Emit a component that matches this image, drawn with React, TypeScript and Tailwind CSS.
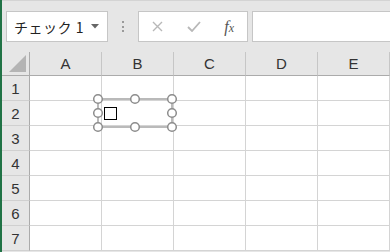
import React from "react";

const cols = ["A", "B", "C", "D", "E"];
const rows = [1, 2, 3, 4, 5, 6, 7];

export default function App() {
  const font = { fontFamily: '"Noto Sans CJK JP", "Noto Sans", sans-serif' };
  return (
    <div className="relative w-[390px] h-[252px] overflow-hidden bg-[#e6e6e6] flex" style={font}>
      <div className="w-[2px] h-full bg-[#217346] shrink-0" />
      <div className="flex flex-col flex-1 min-w-0">
        {/* toolbar */}
        <div className="h-[52px] shrink-0 flex items-start pt-[11px] pl-[4px] border-t border-[#d4d4d4]">
          <div className="w-[102px] h-[31px] bg-white border border-[#c6c6c6] flex items-center pl-[7px] pr-[6px] mt-[-1px]">
            <span className="text-[14px] text-[#222] leading-none whitespace-nowrap tracking-[0.5px] flex-1">チェック 1</span>
            <svg width="8" height="5" viewBox="0 0 8 5" className="mr-[2px] shrink-0">
              <path d="M0 0 L8 0 L4 4.5 Z" fill="#666" />
            </svg>
          </div>
          <div className="w-[30px] h-[31px] flex flex-col items-center justify-center gap-[2.5px] mt-[-1px]">
            <div className="w-[2px] h-[2px] bg-[#9a9a9a]" />
            <div className="w-[2px] h-[2px] bg-[#9a9a9a]" />
            <div className="w-[2px] h-[2px] bg-[#9a9a9a]" />
          </div>
          <div className="w-[110px] h-[31px] bg-white border border-[#c6c6c6] flex items-center mt-[-1px]">
            <div className="w-[36px] flex justify-center ml-[1px]">
              <svg width="11" height="11" viewBox="0 0 11 11">
                <path d="M1 1 L10 10 M10 1 L1 10" stroke="#b8b8b8" strokeWidth="1.4" />
              </svg>
            </div>
            <div className="w-[36px] flex justify-center">
              <svg width="14" height="11" viewBox="0 0 14 11">
                <path d="M1 6 L5 10 L13 1" stroke="#b8b8b8" strokeWidth="1.8" fill="none" />
              </svg>
            </div>
            <div className="w-[36px] flex justify-center">
              <span className="text-[16px] italic text-[#555] leading-none" style={{ fontFamily: '"Liberation Serif", serif' }}>
                f<span className="text-[12px]">x</span>
              </span>
            </div>
          </div>
          <div className="ml-[4px] flex-1 h-[31px] bg-white border border-[#c6c6c6] border-r-0 mt-[-1px]" />
        </div>
        {/* grid */}
        <div className="grid grid-cols-[28px_72px_72px_72px_72px_72px] grid-rows-[24px_25px_25px_25px_25px_25px_25px_25px]">
          <div className="bg-[#e6e6e6] border-r border-b border-[#ababab] relative">
            <svg width="18" height="18" viewBox="0 0 18 18" className="absolute left-[7px] top-[3px]">
              <path d="M17 0 L17 17 L0 17 Z" fill="#b4b4b4" />
            </svg>
          </div>
          {cols.map((c) => (
            <div key={c} className="bg-[#e6e6e6] border-r border-b border-r-[#c6c6c6] border-b-[#ababab] flex items-center justify-center text-[15px] text-[#333] leading-none" style={{ fontFamily: '"Liberation Sans", "Noto Sans", sans-serif' }}>
              {c}
            </div>
          ))}
          {rows.map((r) => (
            <React.Fragment key={r}>
              <div className="bg-[#e6e6e6] border-r border-b border-r-[#ababab] border-b-[#d0d0d0] flex items-center justify-center text-[15px] text-[#333] leading-none pt-[1px]" style={{ fontFamily: '"Liberation Sans", "Noto Sans", sans-serif' }}>
                {r}
              </div>
              {cols.map((c) => (
                <div key={c} className="bg-white border-r border-b border-[#d4d4d4]" />
              ))}
            </React.Fragment>
          ))}
        </div>
      </div>
      {/* checkbox object with selection handles */}
      <svg width="86" height="40" viewBox="0 0 86 40" className="absolute left-[92px] top-[93px]">
        <rect x="6" y="6" width="74" height="28" fill="none" stroke="#8c8c8c" strokeWidth="1.2" />
        <rect x="12.5" y="14.5" width="12" height="12" fill="white" stroke="#000" strokeWidth="1" />
        {[
          [6, 6], [43, 6], [80, 6],
          [6, 20], [80, 20],
          [6, 34], [43, 34], [80, 34],
        ].map(([x, y], i) => (
          <circle key={i} cx={x} cy={y} r="4.3" fill="white" stroke="#8c8c8c" strokeWidth="1.5" />
        ))}
      </svg>
    </div>
  );
}
